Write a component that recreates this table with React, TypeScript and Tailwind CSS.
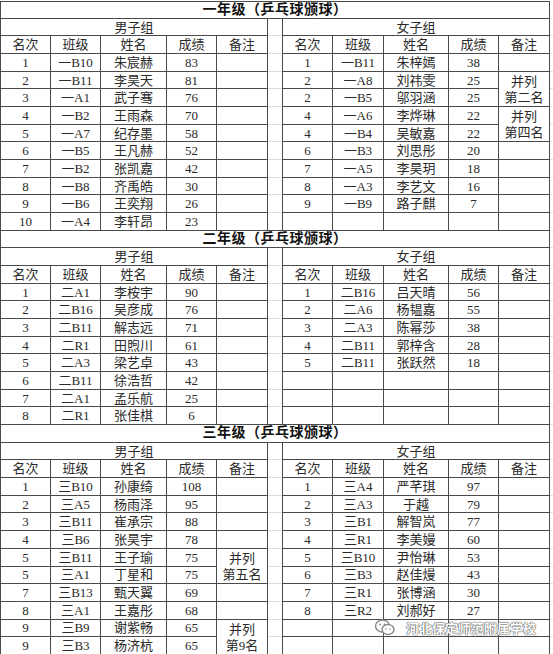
import React from "react";
import clsx from "clsx";

type Row = [string, string, string, string];
type Notes = Record<number, [string, string]>;

type Section = {
  title: string;
  rows: number;
  boys: Row[];
  girls: Row[];
  boysNotes?: Notes;
  girlsNotes?: Notes;
};

const SECTIONS: Section[] = [
  {
    title: "一年级（乒乓球颁球）",
    rows: 10,
    boys: [
      ["1", "一B10", "朱宸赫", "83"],
      ["2", "一B11", "李昊天", "81"],
      ["3", "一A1", "武子骞", "76"],
      ["4", "一B2", "王雨森", "70"],
      ["5", "一A7", "纪存墨", "58"],
      ["6", "一B5", "王凡赫", "52"],
      ["7", "一B2", "张凯嘉", "42"],
      ["8", "一B8", "齐禹皓", "30"],
      ["9", "一B6", "王奕翔", "26"],
      ["10", "一A4", "李轩昂", "23"],
    ],
    girls: [
      ["1", "一B11", "朱梓嫣", "38"],
      ["2", "一A8", "刘祎雯", "25"],
      ["2", "一B5", "邬羽涵", "25"],
      ["4", "一A6", "李烨琳", "22"],
      ["4", "一B4", "吴敏嘉", "22"],
      ["6", "一B3", "刘思彤", "20"],
      ["7", "一A5", "李昊玥", "18"],
      ["8", "一A3", "李艺文", "16"],
      ["9", "一B9", "路子麒", "7"],
    ],
    girlsNotes: { 1: ["并列", "第二名"], 3: ["并列", "第四名"] },
  },
  {
    title: "二年级（乒乓球颁球）",
    rows: 8,
    boys: [
      ["1", "二A1", "李桉宇", "90"],
      ["2", "二B16", "吴彦成", "76"],
      ["3", "二B11", "解志远", "71"],
      ["4", "二R1", "田煦川", "61"],
      ["5", "二A3", "梁艺卓", "43"],
      ["6", "二B11", "徐浩哲", "42"],
      ["7", "二A1", "孟乐航", "25"],
      ["8", "二R1", "张佳棋", "6"],
    ],
    girls: [
      ["1", "二B16", "吕天晴", "56"],
      ["2", "二A6", "杨韫嘉", "55"],
      ["3", "二A3", "陈幂莎", "38"],
      ["4", "二B11", "郭梓含", "28"],
      ["5", "二B11", "张跃然", "18"],
    ],
  },
  {
    title: "三年级（乒乓球颁球）",
    rows: 10,
    boys: [
      ["1", "三B10", "孙康绮", "108"],
      ["2", "三A5", "杨雨泽", "95"],
      ["3", "三B11", "崔承宗", "88"],
      ["4", "三B6", "张昊宇", "78"],
      ["5", "三B11", "王子瑜", "75"],
      ["5", "三A1", "丁星和", "75"],
      ["7", "三B13", "甄天翼", "69"],
      ["8", "三A1", "王嘉彤", "68"],
      ["9", "三B9", "谢紫畅", "65"],
      ["9", "三B3", "杨济杭", "65"],
    ],
    girls: [
      ["1", "三A4", "严芊琪", "97"],
      ["2", "三A3", "于越", "79"],
      ["3", "三B1", "解智岚", "77"],
      ["4", "三R1", "李美嫚", "60"],
      ["5", "三B10", "尹怡琳", "53"],
      ["6", "三B3", "赵佳熳", "43"],
      ["7", "三R1", "张博涵", "30"],
      ["8", "三R2", "刘郝好", "27"],
    ],
    boysNotes: { 4: ["并列", "第五名"], 8: ["并列", "第9名"] },
  },
];

const HEADERS = ["名次", "班级", "姓名", "成绩", "备注"];

function Cell({ children, className }: { children?: React.ReactNode; className?: string }) {
  return (
    <div
      className={clsx(
        "flex items-center justify-center whitespace-nowrap border-b border-r border-[#4a4a4a] text-[13px] leading-none text-[#2a2a2a]",
        className,
      )}
    >
      {children}
    </div>
  );
}

function Faint({ dark }: { dark?: boolean }) {
  return <div className={clsx("border-b", dark ? "border-[#4a4a4a]" : "border-[#dedede]")} />;
}

function sideCells(rows: Row[], notes: Notes | undefined, i: number, key: string) {
  const r = rows[i];
  const out: React.ReactNode[] = [];
  for (let c = 0; c < 4; c++) {
    out.push(
      <Cell key={`${key}-${c}`} className={c === 0 ? "border-l" : undefined}>
        {r ? r[c] : ""}
      </Cell>,
    );
  }
  const note = notes?.[i];
  if (note) {
    // merged remark cell over two rows, one line per row
    out.push(
      <Cell key={`${key}-n`} className="row-span-2 flex-col">
        <span className="flex h-[17px] items-center pt-[2px]">{note[0]}</span>
        <span className="flex h-[17px] items-center">{note[1]}</span>
      </Cell>,
    );
  } else if (!notes?.[i - 1]) {
    out.push(<Cell key={`${key}-n`} />);
  }
  return out;
}

function SectionGrid({ s, first }: { s: Section; first: boolean }) {
  const body: React.ReactNode[] = [];
  for (let i = 0; i < s.rows; i++) {
    const last = i === s.rows - 1;
    body.push(...sideCells(s.boys, s.boysNotes, i, `b${i}`));
    body.push(<Faint key={`g${i}`} dark={last} />);
    body.push(...sideCells(s.girls, s.girlsNotes, i, `w${i}`));
    body.push(<Faint key={`m${i}`} />);
  }

  return (
    <div className="grid grid-cols-[51px_50px_66px_50px_51px_14px_51px_51px_65px_50px_51px_3px] auto-rows-[17.68px]">
      {/* title */}
      <Cell
        className={clsx(
          "col-span-11 border-l text-[14px] font-bold tracking-[0.5px] text-[#111]",
          first && "border-t",
        )}
      >
        {s.title}
      </Cell>
      <Faint />

      {/* group row */}
      <Cell className="col-span-5 border-l">男子组</Cell>
      <Faint />
      <Cell className="col-span-5 border-l">女子组</Cell>
      <Faint />

      {/* headers */}
      {HEADERS.map((h, i) => (
        <Cell key={`hb${i}`} className={i === 0 ? "border-l" : undefined}>
          {h}
        </Cell>
      ))}
      <Faint />
      {HEADERS.map((h, i) => (
        <Cell key={`hg${i}`} className={i === 0 ? "border-l" : undefined}>
          {h}
        </Cell>
      ))}
      <Faint />

      {body}
    </div>
  );
}

function WechatMark() {
  return (
    <svg width="22" height="19" viewBox="0 0 22 19" fill="none">
      <ellipse cx="8.5" cy="8" rx="7" ry="6" fill="#fff" stroke="#8a8a8a" strokeWidth="1.4" />
      <ellipse cx="14" cy="11.5" rx="6" ry="5" fill="#fff" stroke="#8a8a8a" strokeWidth="1.4" />
      <circle cx="6" cy="6.5" r="0.9" fill="#8a8a8a" />
      <circle cx="10.5" cy="6.5" r="0.9" fill="#8a8a8a" />
      <circle cx="12" cy="11" r="0.8" fill="#8a8a8a" />
      <circle cx="16" cy="11" r="0.8" fill="#8a8a8a" />
    </svg>
  );
}

export default function App() {
  return (
    <div
      className="relative h-[654px] w-[553px] overflow-hidden bg-white"
      style={{ fontFamily: '"Liberation Serif", "Noto Sans CJK SC", serif' }}
    >
      <div className="flex flex-col pt-px">
        {SECTIONS.map((s, i) => (
          <SectionGrid key={s.title} s={s} first={i === 0} />
        ))}
      </div>

      {/* watermark */}
      <div className="absolute left-[374px] top-[618px] flex items-center gap-[10px]">
        <WechatMark />
        <span
          className="text-[13px] font-bold leading-none text-white [text-shadow:0_0_1px_#555,0_0_1px_#555,0_0_1px_#555]"
          style={{ fontFamily: '"Noto Sans CJK SC", sans-serif' }}
        >
          河北保定师范附属学校
        </span>
      </div>
    </div>
  );
}
